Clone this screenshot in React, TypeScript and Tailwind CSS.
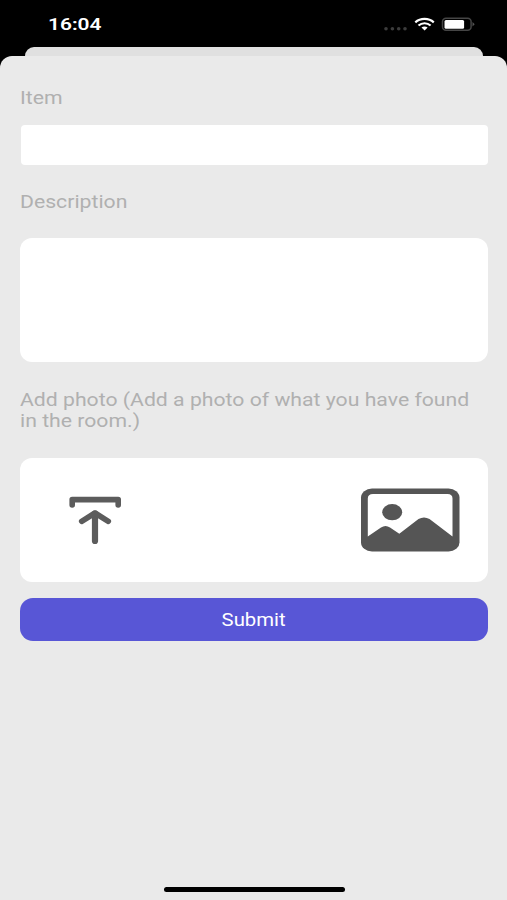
import React from 'react';

const StatusBar: React.FC = () => {
  return (
    <div className="h-[47px] pl-12 pr-8 pt-3.5 flex justify-between">
      <span className="h-[21px] leading-[21px] text-[17px] font-semibold text-white origin-left scale-x-[1.23]">
        16:04
      </span>
      <svg width="92" height="21" viewBox="383.3 14 92 21" fill="none">
        {/* Signal */}
        <g fill="#3c3c3c">
          <circle cx="386.3" cy="28.8" r="1.8" />
          <circle cx="392.7" cy="28.8" r="1.8" />
          <circle cx="399" cy="28.8" r="1.8" />
          <circle cx="405.3" cy="28.8" r="1.8" />
        </g>
        {/* Wifi */}
        <g stroke="#fff" strokeWidth="2.2">
          <path d="M415.6 22.4C420.8 17.8 428.9 17.8 434.1 22.4" />
          <path d="M418.8 25.5C422.3 22.5 427.4 22.5 430.9 25.5" />
        </g>
        <path d="M421.8 27.6C423.6 26.2 426.1 26.2 427.9 27.6L424.9 30.6Z" fill="#fff" />
        {/* Battery */}
        <rect x="442.8" y="18.3" width="28.6" height="12" rx="3.5" stroke="#454545" strokeWidth="1.5" />
        <path d="M472.8 22L475 24.3L472.8 26.6Z" fill="#555" />
        <rect x="444.8" y="20" width="19.6" height="8.8" rx="1.5" fill="#fff" />
      </svg>
    </div>
  );
};

const UploadIcon: React.FC = () => {
  return (
    <svg
      width="54"
      height="50"
      viewBox="68 495 54 50"
      fill="none"
      stroke="#5c5c5c"
      strokeWidth="5.6"
      strokeLinecap="round"
      strokeLinejoin="round"
    >
      <path d="M72.2 505V499.6H118.2V505" />
      <path d="M95 541V513.5" strokeWidth="6.2" />
      <path d="M81.7 521.3L95 513L108.3 521.3" />
    </svg>
  );
};

const ImageIcon: React.FC = () => {
  return (
    <svg width="100" height="64" viewBox="360 488.5 100 64">
      <rect x="361" y="489" width="98.5" height="63" rx="11" ry="9" fill="#555" />
      <path
        d="M367.8 537V499Q367.8 494.5 373 494.5H447.5Q452.5 494.5 452.5 499V537L429.5 519.6Q424 516.2 418.5 519.6L399.3 534.3L390 528Q385.5 525 381 528Z"
        fill="#fff"
      />
      <ellipse cx="392.2" cy="512.7" rx="10" ry="8.1" fill="#555" />
    </svg>
  );
};

const Label: React.FC<{ children: React.ReactNode }> = ({ children }) => {
  return (
    <label className="block w-max leading-[20.5px] text-[17.5px] text-[#b0b0b0] origin-left scale-x-[1.212]">
      {children}
    </label>
  );
};

const App: React.FC = () => {
  return (
    <div className="h-[900px] bg-black flex flex-col overflow-hidden font-['Roboto',sans-serif]">
      <StatusBar />

      {/* Card behind the sheet */}
      <div className="h-[9px] shrink-0 ml-[25px] mr-6 rounded-t-[10px] bg-[#e0e0e0]" />

      {/* Sheet */}
      <div className="flex-1 flex flex-col rounded-t-[12px] bg-[#eaeaea] pl-5 pr-[19px] pt-8">
        <Label>Item</Label>
        <input className="mt-4 mx-[0.5px] h-[40.5px] shrink-0 rounded-[4px] bg-white px-3 outline-none" />

        <div className="mt-[26.5px]">
          <Label>Description</Label>
        </div>
        <textarea className="mt-[26px] h-[124px] w-full shrink-0 resize-none rounded-[12px] bg-white p-3 outline-none" />

        <div className="mt-7">
          <Label>
            Add photo (Add a photo of what you have found
            <br />
            in the room.)
          </Label>
        </div>
        <div className="mt-[27px] h-[124px] shrink-0 rounded-[12px] bg-white pl-12 pr-7 flex items-center justify-between">
          <UploadIcon />
          <ImageIcon />
        </div>

        <button className="mt-4 h-[43px] shrink-0 rounded-[13px] bg-[#5856d6] pt-0.5 text-[17.5px] text-white">
          <span className="inline-block scale-x-[1.16]">Submit</span>
        </button>

        {/* Home indicator */}
        <div className="mt-auto mb-2 h-[5px] w-[181px] ml-36 rounded-full bg-black" />
      </div>
    </div>
  );
};

export default App;
